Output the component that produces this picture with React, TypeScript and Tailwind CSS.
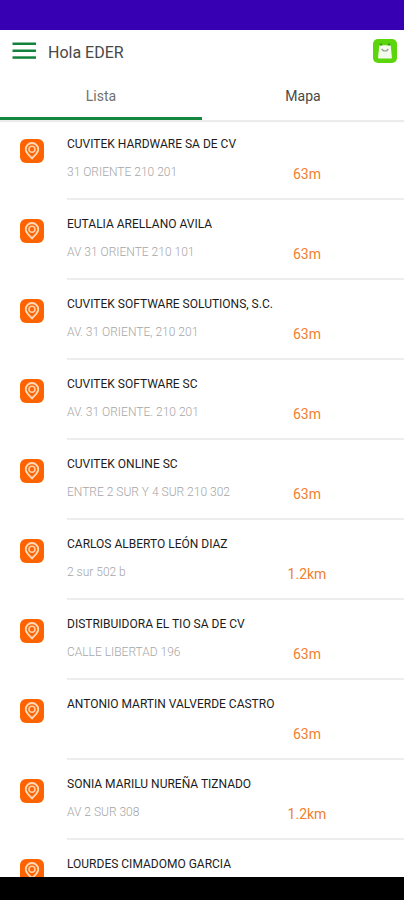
import { FC, useState } from 'react';
import { clsx } from 'clsx';

type Client = {
  name: string;
  address: string;
  distance: string;
};

const clients: Client[] = [
  { name: 'CUVITEK HARDWARE SA DE CV', address: '31 ORIENTE 210 201', distance: '63m' },
  { name: 'EUTALIA ARELLANO AVILA', address: 'AV 31 ORIENTE 210 101', distance: '63m' },
  { name: 'CUVITEK SOFTWARE SOLUTIONS, S.C.', address: 'AV. 31 ORIENTE, 210 201', distance: '63m' },
  { name: 'CUVITEK SOFTWARE SC', address: 'AV. 31 ORIENTE. 210 201', distance: '63m' },
  { name: 'CUVITEK ONLINE SC', address: 'ENTRE 2 SUR Y 4 SUR 210 302', distance: '63m' },
  { name: 'CARLOS ALBERTO LEÓN DIAZ', address: '2 sur 502 b', distance: '1.2km' },
  { name: 'DISTRIBUIDORA EL TIO SA DE CV', address: 'CALLE LIBERTAD 196', distance: '63m' },
  { name: 'ANTONIO MARTIN VALVERDE CASTRO', address: '', distance: '63m' },
  { name: 'SONIA MARILU NUREÑA TIZNADO', address: 'AV 2 SUR 308', distance: '1.2km' },
  { name: 'LOURDES CIMADOMO GARCIA', address: '', distance: '' },
];

const tabs = ['Lista', 'Mapa'];

const MenuIcon: FC = () => (
  <svg className="h-6 w-6" viewBox="0 0 24 24" fill="#14823c" aria-hidden="true">
    <rect x="0.5" y="3.5" width="23.5" height="2.5" />
    <rect x="0.5" y="10.5" width="23.5" height="2.5" />
    <rect x="0.5" y="17.3" width="23.5" height="2.5" />
  </svg>
);

const BagIcon: FC = () => (
  <svg className="h-6 w-6" viewBox="0 0 24 24" fill="none" aria-hidden="true">
    <rect width="24" height="24" rx="5" fill="#5cd60c" />
    <path d="M6.300 6.200h11.400l1.200 12.300a1 1 0 0 1-1 1.100H6.100a1 1 0 0 1-1-1.100z" fill="#f4fbee" />
    <path d="M6.600 4.400h2.600v2.200H6.600zM14.800 4.400h2.600v2.200h-2.600z" fill="#35a012" />
    <path d="M9 10.200c1 2.400 5 2.400 6 0" stroke="#8a9a85" strokeWidth="1.200" strokeLinecap="round" />
  </svg>
);

const PinIcon: FC = () => (
  <svg className="mt-[19px] h-6 w-6 shrink-0" viewBox="0 0 24 24" fill="none" aria-hidden="true">
    <rect width="24" height="24" rx="6" fill="#ff6200" />
    <path
      d="M12 19.500c-1.200-2.200-6.200-5-6.200-9.300a6.200 6.200 0 0 1 12.400 0C18.200 14.500 13.200 17.300 12 19.500z"
      stroke="#ffd9b8"
      strokeWidth="1.900"
      strokeLinejoin="round"
    />
    <circle cx="12" cy="10.200" r="3" stroke="#ffd0a8" strokeWidth="1.600" />
  </svg>
);

const ClientRow: FC<{ client: Client }> = ({ client }) => (
  <li className="flex gap-[23px] pl-5">
    <PinIcon />
    <div className="flex h-20 min-w-0 flex-1 flex-col gap-3 border-b-2 border-[#ededed] pt-4">
      <div className="truncate text-xs leading-4 text-[#1c1c1c]">{client.name}</div>
      <div className="flex">
        <div className="min-w-0 flex-1 text-xs leading-4 font-light whitespace-nowrap text-[#a6a6a6]">
          {client.address}
        </div>
        <div className="mr-[22px] w-[150px] text-center text-sm leading-5 text-[#f08030]">{client.distance}</div>
      </div>
    </div>
  </li>
);

export default function App() {
  const [activeTab, setActiveTab] = useState('Lista');

  return (
    <div className="flex h-screen flex-col bg-white font-[Roboto,sans-serif]">
      {/* status bar */}
      <div className="h-[30px] shrink-0 bg-[#3700b3]" />

      <header className="flex h-[42px] shrink-0 items-center pr-[7px] pl-3">
        <button type="button" aria-label="Menú">
          <MenuIcon />
        </button>
        <h1 className="ml-3 flex-1 pt-1 text-base text-[#484848]">Hola EDER</h1>
        <button type="button" aria-label="Pedidos">
          <BagIcon />
        </button>
      </header>

      <nav className="z-10 flex h-12 shrink-0 shadow-[0_2px_1px_rgba(0,0,0,0.08)]">
        {tabs.map((tab) => (
          <button
            key={tab}
            type="button"
            onClick={() => setActiveTab(tab)}
            className={clsx(
              'flex-1 border-y-3 border-transparent bg-white text-sm',
              activeTab === tab ? 'border-b-[#14883e] text-[#707070]' : 'text-[#484848]',
            )}
          >
            {tab}
          </button>
        ))}
      </nav>

      <main className="min-h-0 flex-1 overflow-y-auto [scrollbar-width:none]">
        <ul>
          {clients.map((client) => (
            <ClientRow key={client.name} client={client} />
          ))}
        </ul>
      </main>

      {/* system navigation */}
      <div className="h-[23px] shrink-0 bg-black" />
    </div>
  );
}
